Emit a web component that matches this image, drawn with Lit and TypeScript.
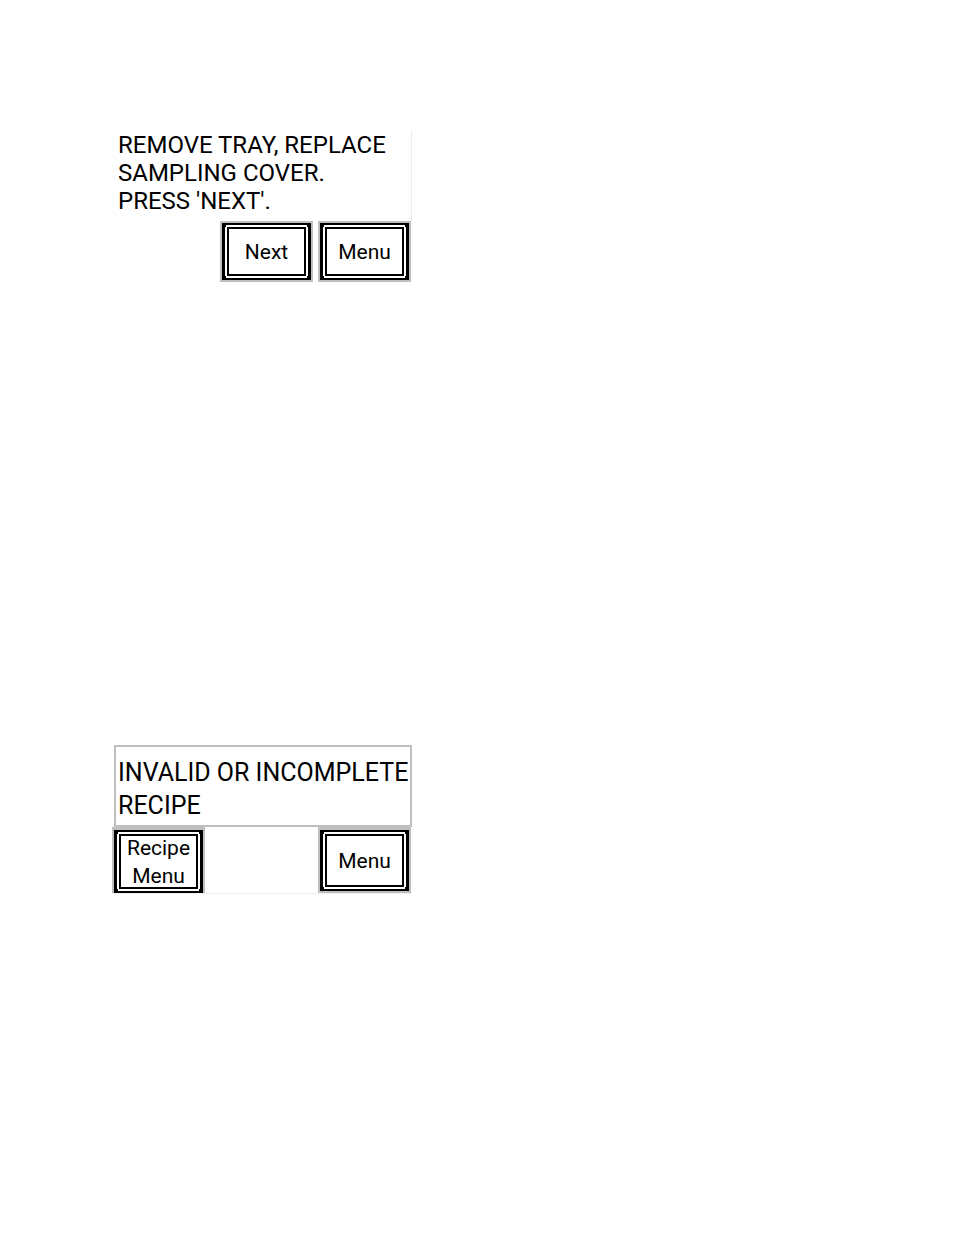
import { LitElement, html, css } from "lit";
import { customElement, property } from "lit/decorators.js";

@customElement("panel-key")
class PanelKey extends LitElement {
  @property({ type: Array }) lines: string[] = [];

  static styles = css`
    :host {
      display: flex;
      box-sizing: border-box;
      width: 93px;
      border: 2px solid #bfbfbf;
    }
    .key {
      box-sizing: border-box;
      display: flex;
      flex: 1;
      margin: 0;
      padding: 2px;
      border: 2px solid #000;
      border-width: 2px 3px;
      border-radius: 0;
      color: #000;
      font: 21px/28px Roboto, "Liberation Sans", sans-serif;
      background:
        linear-gradient(#000, #000) left top / 1px 2px no-repeat,
        linear-gradient(#000, #000) right top / 1px 2px no-repeat,
        linear-gradient(#000, #000) left bottom / 1px 2px no-repeat,
        linear-gradient(#000, #000) right bottom / 1px 2px no-repeat,
        #fff;
      background-origin: padding-box;
      cursor: pointer;
    }
    .face {
      flex: 1;
      display: flex;
      flex-direction: column;
      align-items: center;
      justify-content: center;
      align-self: stretch;
      border: 2px solid #000;
      background: #fff;
    }
  `;

  render() {
    return html`<button class="key" type="button">
      <span class="face">${this.lines.map((l) => html`<span>${l}</span>`)}</span>
    </button>`;
  }
}

@customElement("app-root")
class AppRoot extends LitElement {
  static styles = css`
    :host {
      display: block;
      box-sizing: border-box;
      min-height: 100vh;
      background: #fff;
      color: #000;
      font-family: Roboto, "Liberation Sans", sans-serif;
    }
    .page {
      display: flex;
      flex-direction: column;
      gap: 463px;
      padding: 131px 112px;
    }
    .screen {
      max-width: 300px;
    }
    p {
      margin: 0;
      white-space: nowrap;
    }
    .prompt {
      padding-left: 6px;
      border-right: 1px solid #efede2;
      font-size: 24px;
      line-height: 28px;
      padding-bottom: 6px;
    }
    .alert {
      margin-left: 2px;
      padding: 9px 0 3px 2px;
      border: 2px solid #bfbfbf;
      font-size: 25px;
      line-height: 33px;
    }
    .keys {
      display: flex;
      justify-content: flex-end;
      gap: 5px;
      padding-right: 1px;
    }
    .keys panel-key {
      height: 61px;
    }
    .spread {
      justify-content: space-between;
      border-bottom: 1px solid #f3efe6;
    }
    .spread panel-key {
      height: 66px;
      border-top-width: 3px;
    }
    .spread panel-key.tall {
      border-bottom-width: 0;
    }
  `;

  render() {
    return html`<main class="page">
      <section class="screen">
        <div class="prompt">
          <p>REMOVE TRAY, REPLACE</p>
          <p>SAMPLING COVER.</p>
          <p>PRESS 'NEXT'.</p>
        </div>
        <div class="keys">
          <panel-key .lines=${["Next"]}></panel-key>
          <panel-key .lines=${["Menu"]}></panel-key>
        </div>
      </section>
      <section class="screen">
        <div class="alert">
          <p>INVALID OR INCOMPLETE</p>
          <p>RECIPE</p>
        </div>
        <div class="keys spread">
          <panel-key class="tall" .lines=${["Recipe", "Menu"]}></panel-key>
          <panel-key .lines=${["Menu"]}></panel-key>
        </div>
      </section>
    </main>`;
  }
}
